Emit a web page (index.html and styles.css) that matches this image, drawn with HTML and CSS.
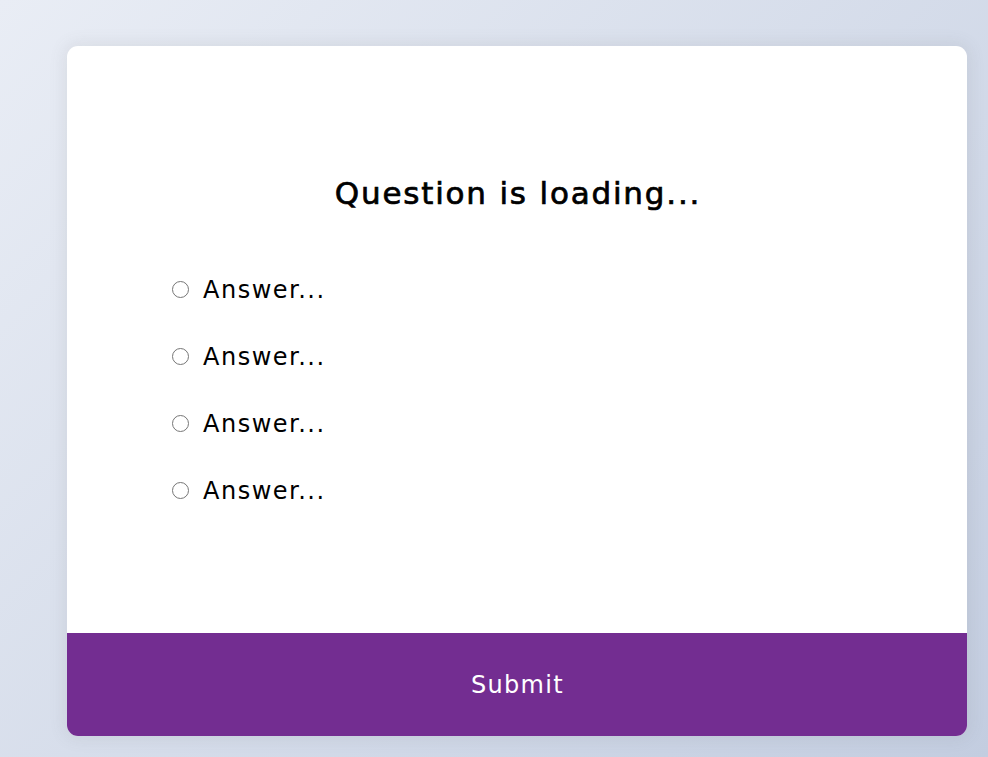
FILE: index.html
```html
<!DOCTYPE html>
<html lang="en">
<head>
<meta charset="UTF-8">
<title>Quiz</title>
<link rel="stylesheet" href="styles.css">
</head>
<body>
  <div class="quiz-container">
    <div class="quiz-header">
      <h2 class="question">Question is loading...</h2>
      <ul class="answers">
        <li class="answer-row"><input type="radio" name="answer" class="answer" id="a"><label for="a">Answer...</label></li>
        <li class="answer-row"><input type="radio" name="answer" class="answer" id="b"><label for="b">Answer...</label></li>
        <li class="answer-row"><input type="radio" name="answer" class="answer" id="c"><label for="c">Answer...</label></li>
        <li class="answer-row"><input type="radio" name="answer" class="answer" id="d"><label for="d">Answer...</label></li>
      </ul>
    </div>
    <button class="submit">Submit</button>
  </div>
</body>
</html>
```
FILE: styles.css
```css
* { box-sizing: border-box; }
html, body { margin: 0; height: 100%; }
body {
  font-family: "DejaVu Sans", "Open Sans", sans-serif;
  background-color: #c5cfe0;
  background-image: linear-gradient(315deg, #c3cde0 0%, #e9edf5 100%);
  padding: 46px 0 0 67px;
  overflow: hidden;
}
.quiz-container {
  width: 900px;
  height: 690px;
  background: #ffffff;
  border-radius: 11px;
  box-shadow: 0 0 16px 3px rgba(100, 100, 100, 0.1);
  overflow: hidden;
  display: flex;
  flex-direction: column;
}
.quiz-header {
  flex: 1;
  padding: 123px 105px 0 105px;
}
.question {
  margin: 0;
  padding-left: 2px;
  text-align: center;
  font-size: 31px;
  line-height: 48px;
  font-weight: 400;
  letter-spacing: 1.8px;
  color: #000;
  -webkit-text-stroke: 0.7px #000;
}
.answers {
  list-style: none;
  margin: 54px 0 0 0;
  padding: 0;
  display: flex;
  flex-direction: column;
  gap: 30px;
}
.answer-row {
  display: flex;
  align-items: center;
  height: 37px;
  font-size: 24px;
  letter-spacing: 1.5px;
  color: #000;
}
.answer {
  appearance: none;
  -webkit-appearance: none;
  width: 17px;
  height: 17px;
  margin: 0 14px 0 0;
  border: 1.5px solid #767676;
  border-radius: 50%;
  background: #fff;
  flex: none;
}
.submit {
  height: 103px;
  width: 100%;
  border: none;
  padding: 0 0 0 1px;
  background-color: #732d91;
  color: #fff;
  font-family: inherit;
  font-size: 24px;
  letter-spacing: 1.3px;
  cursor: pointer;
  flex: none;
}
```
